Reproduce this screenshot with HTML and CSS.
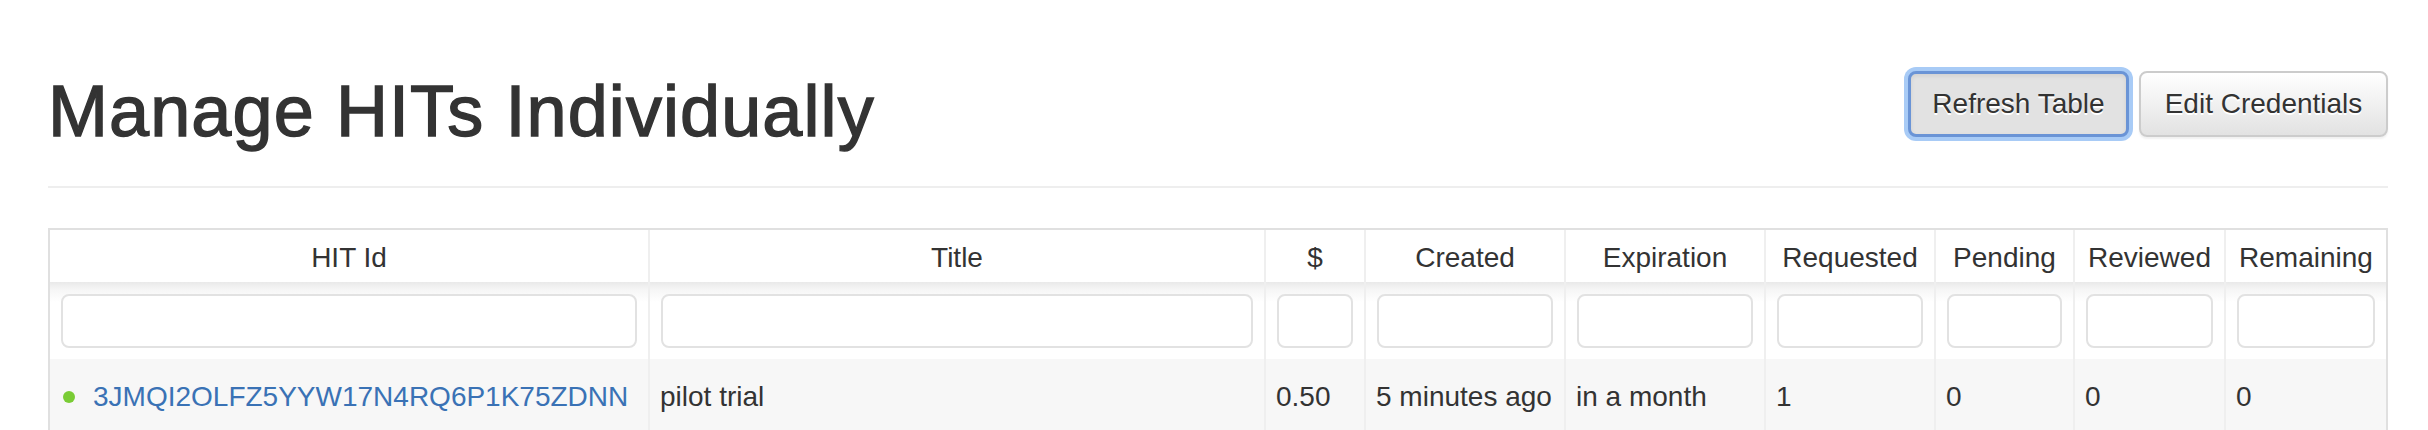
FILE: index.html
```html
<!DOCTYPE html>
<html>
<head>
<meta charset="utf-8">
<title>Manage HITs Individually</title>
<link rel="stylesheet" href="styles.css">
</head>
<body>
<div class="container">
  <div class="page-header">
    <h1 class="title">Manage HITs Individually</h1>
    <div class="btn-group">
      <button class="btn btn-focus" type="button">Refresh Table</button>
      <button class="btn btn-edit" type="button">Edit Credentials</button>
    </div>
  </div>
  <table class="hits">
    <colgroup>
      <col class="c-id">
      <col class="c-title">
      <col class="c-price">
      <col class="c-created">
      <col class="c-exp">
      <col class="c-req">
      <col class="c-pend">
      <col class="c-rev">
      <col class="c-rem">
    </colgroup>
    <thead>
      <tr class="head-row">
        <th>HIT Id</th>
        <th>Title</th>
        <th>$</th>
        <th>Created</th>
        <th>Expiration</th>
        <th>Requested</th>
        <th>Pending</th>
        <th>Reviewed</th>
        <th>Remaining</th>
      </tr>
      <tr class="filter-row">
        <td><input class="filter" type="text"></td>
        <td><input class="filter" type="text"></td>
        <td><input class="filter" type="text"></td>
        <td><input class="filter" type="text"></td>
        <td><input class="filter" type="text"></td>
        <td><input class="filter" type="text"></td>
        <td><input class="filter" type="text"></td>
        <td><input class="filter" type="text"></td>
        <td><input class="filter" type="text"></td>
      </tr>
    </thead>
    <tbody>
      <tr class="data-row">
        <td><span class="dot"></span><a class="hit-link" href="#">3JMQI2OLFZ5YYW17N4RQ6P1K75ZDNN</a></td>
        <td>pilot trial</td>
        <td>0.50</td>
        <td>5 minutes ago</td>
        <td>in a month</td>
        <td>1</td>
        <td>0</td>
        <td>0</td>
        <td>0</td>
      </tr>
    </tbody>
  </table>
</div>
</body>
</html>
```

FILE: styles.css
```css
html, body {
  margin: 0;
  padding: 0;
  background: #fff;
}

body {
  font-family: "Liberation Sans", Arial, Helvetica, sans-serif;
  font-size: 28px;
  line-height: 40px;
  color: #333;
}

.container {
  padding: 71px 40px 0 48px;
}

.page-header {
  display: flex;
  justify-content: space-between;
  align-items: flex-start;
  border-bottom: 2px solid #eee;
  padding-bottom: 35px;
}

.title {
  margin: 1px 0 0 0;
  font-size: 72px;
  line-height: 79px;
  font-weight: 400;
  color: #333;
  letter-spacing: 1.1px;
  -webkit-text-stroke: 1.4px #333;
}

.btn-group {
  display: flex;
  gap: 10px;
}

.btn {
  box-sizing: border-box;
  height: 66px;
  font-family: "Liberation Sans", Arial, Helvetica, sans-serif;
  font-size: 28px;
  color: #333;
  border-radius: 8px;
  text-shadow: 0 2px 0 #fff;
  padding: 0;
  cursor: pointer;
}

.btn-focus {
  width: 221px;
  background: #e2e2e2;
  border: 3px solid #6a94d6;
  box-shadow: 0 0 0 4px #a8cbf6, inset 0 2px 4px rgba(0, 0, 0, 0.08);
}

.btn-edit {
  width: 249px;
  background: linear-gradient(to bottom, #ffffff 0, #e2e2e2 100%);
  border: 2px solid #cccccc;
  box-shadow: 0 2px 2px rgba(0, 0, 0, 0.06);
}

.hits {
  margin-top: 40px;
  width: 2340px;
  table-layout: fixed;
  border-collapse: separate;
  border-spacing: 0;
  border: 2px solid #e0e0e0;
  border-bottom: none;
}

.c-id { width: 598px; }
.c-title { width: 616px; }
.c-price { width: 100px; }
.c-created { width: 200px; }
.c-exp { width: 200px; }
.c-req { width: 170px; }
.c-pend { width: 139px; }
.c-rev { width: 151px; }
.c-rem { width: 162px; }

.hits th,
.hits td {
  box-sizing: border-box;
  border-left: 2px solid #efefef;
  white-space: nowrap;
  overflow: hidden;
}

.hits th:first-child,
.hits td:first-child {
  border-left: none;
}

.head-row th {
  height: 52px;
  padding: 4px 6px 0;
  font-weight: normal;
  text-align: center;
  vertical-align: middle;
  background: #fff;
}

.filter-row td {
  padding: 12px 11px 11px;
  background: linear-gradient(to bottom, #e9e9e9 0, #f6f6f6 8px, #ffffff 20px);
}

.filter {
  display: block;
  box-sizing: border-box;
  width: 100%;
  height: 54px;
  margin: 0;
  border: 2px solid #e2e2e2;
  border-radius: 8px;
  background: #fff;
  outline: none;
  font-size: 28px;
}

.data-row td {
  padding: 18px 10px 14px;
  background: #f7f7f7;
  text-align: left;
  vertical-align: top;
}

.dot {
  display: inline-block;
  width: 12px;
  height: 12px;
  border-radius: 50%;
  background: #7acc35;
  margin: 0 18px 0 3px;
  vertical-align: middle;
  position: relative;
  top: -2px;
}

.hit-link {
  color: #3a72b5;
  text-decoration: none;
}
```
